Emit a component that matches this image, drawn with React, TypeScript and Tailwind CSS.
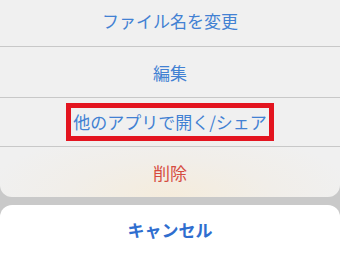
const font = { fontFamily: '"Noto Sans CJK JP", "Noto Sans", sans-serif' };

const rows = [
  { label: "ファイル名を変更", color: "text-[#4281d3]" },
  { label: "編集", color: "text-[#4281d3]" },
  { label: "他のアプリで開く/シェア", color: "text-[#4281d3]", boxed: true },
  { label: "削除", color: "text-[#d64c40]" },
];

export default function App() {
  return (
    <div className="w-[340px] h-[254px] overflow-hidden bg-[#c9c9c9] flex flex-col" style={font}>
      {/* Action list */}
      <div className="shrink-0 rounded-b-[12px] overflow-hidden bg-[radial-gradient(ellipse_55%_35%_at_50%_100%,#f5ecdc_0%,#f1eee9_55%,#f0f0f0_100%)]">
        {rows.map((r, i) => (
          <div
            key={r.label}
            className={`flex items-center justify-center ${i === 0 ? "h-[47px] pb-[5px]" : i === 1 ? "h-[51px]" : i === 2 ? "h-[49px]" : "h-[50px]"} ${i < rows.length - 1 ? "border-b border-[#c8c8c8]" : ""}`}
          >
            {r.boxed ? (
              <span className={`border-[5px] border-[#e3141f] px-[2px] pt-[1px] pb-[2px] text-[17px] leading-[25px] ${r.color}`}>
                {r.label}
              </span>
            ) : (
              <span className={`text-[17px] leading-[25px] ${r.color}`}>{r.label}</span>
            )}
          </div>
        ))}
      </div>

      {/* Cancel */}
      <div className="shrink-0 mt-[8px] h-[56px] rounded-t-[12px] bg-white flex items-start justify-center pt-[12px]">
        <span className="text-[17px] leading-[25px] font-bold text-[#2f6ecf]">キャンセル</span>
      </div>
    </div>
  );
}
